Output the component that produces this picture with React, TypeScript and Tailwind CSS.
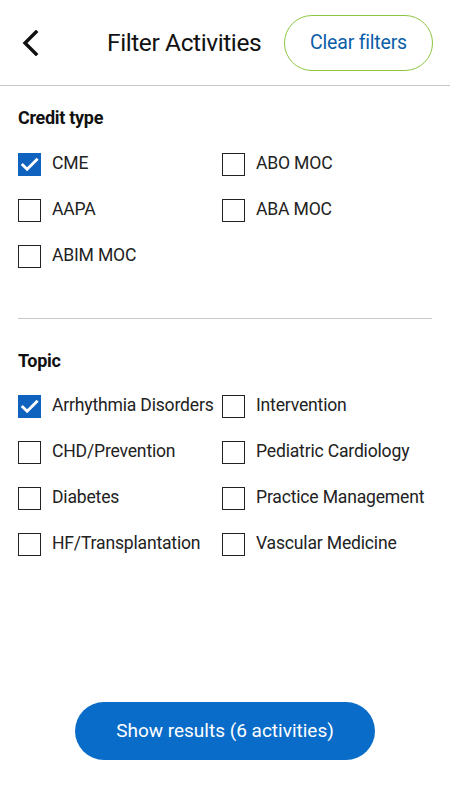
import React from "react";

const Check = ({ checked, label }: { checked?: boolean; label: string }) => (
  <div className="flex items-center h-[46px]">
    {checked ? (
      <div className="w-[23px] h-[23px] bg-[#0f62bd] flex items-center justify-center shrink-0">
        <svg width="19" height="19" viewBox="0 0 24 24" fill="none">
          <path d="M3.5 12.5l5.5 5.5L21 6" stroke="white" strokeWidth="3.6" strokeLinecap="square" />
        </svg>
      </div>
    ) : (
      <div className="w-[23px] h-[23px] border-[1.5px] border-[#222] shrink-0" />
    )}
    <span className="ml-[11px] inline-block origin-left scale-x-[0.95] text-[18.5px] text-[#222] whitespace-nowrap tracking-[-0.2px]">
      {label}
    </span>
  </div>
);

export default function App() {
  return (
    <div className="w-[450px] h-[800px] bg-white flex flex-col" style={{ fontFamily: "Roboto, 'Noto Sans', sans-serif" }}>
      <div className="flex items-center h-[86px] pl-[20px] pr-[17px] border-b border-[#c8c8c8]">
        <svg width="22" height="26" viewBox="0 0 22 26" className="shrink-0 mt-[1px]">
          <path d="M16 2L5 13l11 11" stroke="#111" strokeWidth="3.4" fill="none" strokeLinecap="square" />
        </svg>
        <div className="ml-[65px] mt-[2px] text-[24.5px] text-[#111] tracking-[-0.4px] whitespace-nowrap">Filter Activities</div>
        <div className="flex-1" />
        <button className="w-[149px] h-[56px] rounded-full border-[1.5px] border-[#8cc63f] text-[#0b5ea8] text-[19.5px] tracking-[-0.2px]">
          Clear filters
        </button>
      </div>
      <div className="px-[18px] pt-[20px]">
        <div className="text-[18px] leading-[24px] font-bold text-[#111] tracking-[-0.3px]">Credit type</div>
        <div className="grid grid-cols-[204px_1fr] mt-[11px]">
          <Check checked label="CME" />
          <Check label="ABO MOC" />
          <Check label="AAPA" />
          <Check label="ABA MOC" />
          <Check label="ABIM MOC" />
        </div>
        <div className="border-b border-[#c8c8c8] mt-[39px]" />
        <div className="text-[18px] leading-[24px] font-bold text-[#111] tracking-[-0.3px] mt-[30px]">Topic</div>
        <div className="grid grid-cols-[204px_1fr] mt-[10px]">
          <Check checked label="Arrhythmia Disorders" />
          <Check label="Intervention" />
          <Check label="CHD/Prevention" />
          <Check label="Pediatric Cardiology" />
          <Check label="Diabetes" />
          <Check label="Practice Management" />
          <Check label="HF/Transplantation" />
          <Check label="Vascular Medicine" />
        </div>
      </div>
      <div className="flex-1" />
      <div className="flex justify-center pb-[40px]">
        <button className="w-[300px] h-[58px] rounded-full bg-[#0a6cc9] text-white text-[19px]">
          Show results (6 activities)
        </button>
      </div>
    </div>
  );
}
